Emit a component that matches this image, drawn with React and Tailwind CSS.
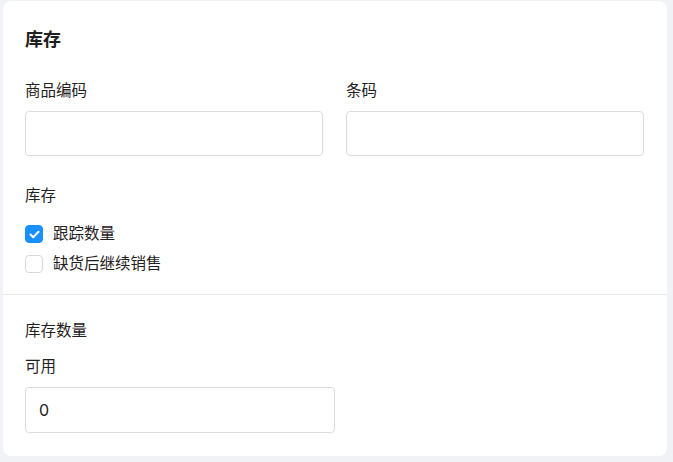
import { useState } from 'react';

const Checkbox = ({ checked, label, onChange }) => (
  <label className="flex h-6 items-center gap-[10px] cursor-pointer" onClick={onChange}>
    <span
      className={`flex h-[18px] w-[18px] items-center justify-center rounded-[4px] border ${
        checked ? 'border-[#1890ff] bg-[#1890ff]' : 'border-[#d9d9d9] bg-white'
      }`}
    >
      {checked && (
        <svg width="11" height="9" viewBox="0 0 11 9" fill="none">
          <path d="M1.5 4.5L4.2 7.2L9.5 1.8" stroke="white" strokeWidth="2" strokeLinecap="round" strokeLinejoin="round" />
        </svg>
      )}
    </span>
    <span className="text-[15.5px] leading-5 text-[#1f2022]">{label}</span>
  </label>
);

const App = () => {
  const [track, setTrack] = useState(true);
  const [oversell, setOversell] = useState(false);

  return (
    <div
      className="min-h-[462px] bg-[#f1f2f5] pl-[3px] pr-[6px] pt-px pb-[6px]"
      style={{ fontFamily: '"Inter", "Noto Sans CJK SC", sans-serif' }}
    >
      <div className="rounded-[8px] bg-white">
        {/* Top section */}
        <div className="pl-[22px] pr-[23px] pt-[27px] pb-[18px]">
          <h2 className="text-[18px] font-bold leading-6 text-[#1f2022]">库存</h2>

          <div className="mt-[29px] grid grid-cols-2 gap-[23px]">
            <div>
              <p className="text-[15.5px] leading-5 text-[#1f2022]">商品编码</p>
              <input className="mt-[10px] h-[45px] w-full rounded-[4px] border border-[#dcdcdc] px-3 outline-none" />
            </div>
            <div>
              <p className="text-[15.5px] leading-5 text-[#1f2022]">条码</p>
              <input className="mt-[10px] h-[45px] w-full rounded-[4px] border border-[#dcdcdc] px-3 outline-none" />
            </div>
          </div>

          <p className="mt-[30px] text-[15.5px] leading-5 text-[#1f2022]">库存</p>
          <div className="mt-4 flex flex-col gap-[6px]">
            <Checkbox checked={track} label="跟踪数量" onChange={() => setTrack(!track)} />
            <Checkbox checked={oversell} label="缺货后继续销售" onChange={() => setOversell(!oversell)} />
          </div>
        </div>

        <div className="h-px bg-[#e8e8ea]"></div>

        {/* Quantity section */}
        <div className="pl-[22px] pr-[23px] pt-[26px] pb-[23px]">
          <p className="text-[15.5px] leading-5 text-[#1f2022]">库存数量</p>
          <p className="mt-4 text-[15.5px] leading-5 text-[#1f2022]">可用</p>
          <div className="mt-[10px] w-1/2">
            <input
              defaultValue="0"
              className="h-[46px] w-full rounded-[4px] border border-[#dcdcdc] pl-[13px] pr-3 text-[16px] text-[#1f2022] outline-none"
            />
          </div>
        </div>
      </div>
    </div>
  );
};

export default App;
